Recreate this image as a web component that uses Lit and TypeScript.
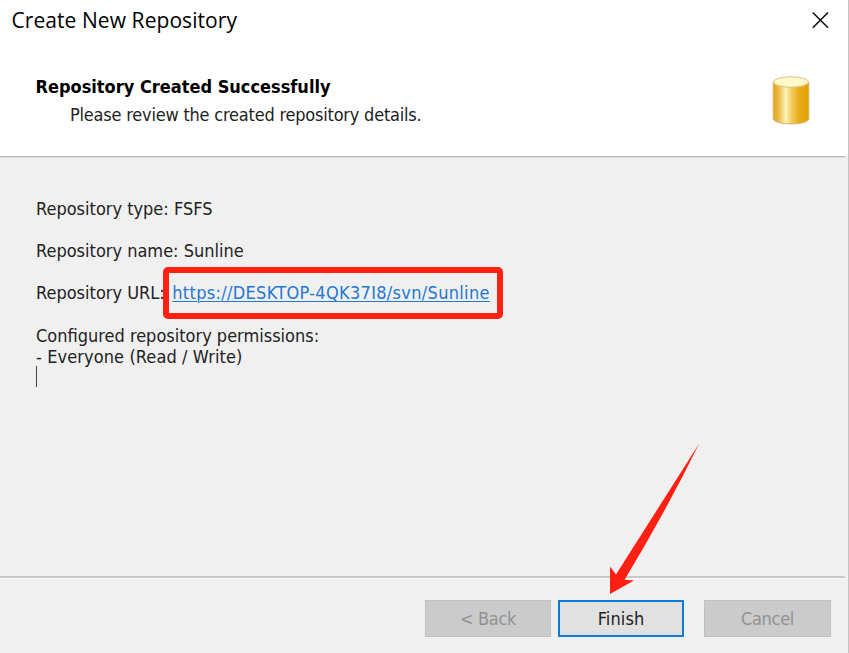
import { LitElement, html, css } from "lit";

class AppRoot extends LitElement {
  static styles = css`
    :host {
      display: flex;
      flex-direction: column;
      position: relative;
      box-sizing: border-box;
      width: 849px;
      height: 653px;
      overflow: hidden;
      border-right: 1px solid #c3c3c3;
      background: #f0f0f0;
      color: #222;
      font: 18px/21px "DejaVu Sans Condensed", "DejaVu Sans", sans-serif;
      white-space: pre;
    }
    .top { background: #fff; height: 156px; flex: none; }
    .titlebar {
      display: flex;
      justify-content: space-between;
      height: 40px;
      padding: 0 18px 0 11.5px;
      align-items: center;
      box-sizing: border-box;
    }
    .title {
      font: 21px/28px "Open Sans", "Noto Sans", sans-serif;
      letter-spacing: 0.07px;
      color: #000;
    }
    .header { display: flex; justify-content: space-between; padding: 36px 38px 0 35.5px; }
    .heading { font-weight: 700; color: #000; line-height: 22px; }
    .sub { padding-left: 34.5px; line-height: 22px; margin-top: 6px; letter-spacing: -0.21px; }
    .rule { flex: none; height: 1px; margin-right: 3px; background: #b9b9b9; border-bottom: 1px solid #dedede; }
    .body { flex: 1; padding: 40px 0 0 36px; }
    .line { height: 21px; margin-bottom: 21px; letter-spacing: 0; }
    .line.tight { margin-bottom: 0; }
    .everyone { letter-spacing: 0.1px; }
    .url { display: flex; margin-bottom: 22px; }
    .marked { position: relative; margin-left: 7.5px; }
    .link {
      color: #2677cf;
      letter-spacing: 0.31px;
      text-decoration: underline;
      text-decoration-thickness: 1px;
      text-underline-offset: 2px;
    }
    .frame {
      position: absolute;
      left: -9.5px;
      top: -15px;
      width: 340px;
      height: 52px;
      box-sizing: border-box;
      border: 6px solid #ff2013;
      border-radius: 5px;
    }
    .caret { width: 1px; height: 21px; margin-top: -1px; background: #444; }
    .foot-rule { flex: none; height: 2px; margin-right: 3px; background: #c8c8c8; border-bottom: 1px solid #fafafa; }
    .footer { display: flex; flex: none; height: 74px; padding: 21px 0 0 425px; box-sizing: border-box; }
    .btn {
      width: 126px;
      height: 37px;
      box-sizing: border-box;
      border: 1px solid #c0c0c0;
      background: #cbcbcb;
      color: #929292;
      line-height: 35px;
      text-align: center;
      letter-spacing: -0.3px;
    }
    .primary { margin: 0 20px 0 7px; border: 2px solid #0d7bdc; background: #e1e1e1; color: #222; line-height: 33px; letter-spacing: 0.1px; }
    .cancel { width: 127px; }
    .arrow { position: absolute; left: 600px; top: 435px; }
  `;

  render() {
    return html`
<div class="top"><div class="titlebar"><span class="title">Create New Repository</span><svg width="19" height="19" viewBox="0 0 19 19"><path d="M1.8 1.5 17 16.7M17 1.5 1.8 16.7" stroke="#111" stroke-width="1.6" fill="none"/></svg></div><div class="header"><div><div class="heading">Repository Created Successfully</div><div class="sub">Please review the created repository details.</div></div><svg width="38" height="50" viewBox="0 0 38 50"><defs><linearGradient id="gold"><stop offset="0" stop-color="#e6a20c"/><stop offset=".14" stop-color="#eaba45"/><stop offset=".36" stop-color="#fff4bc"/><stop offset=".5" stop-color="#f2ce62"/><stop offset=".72" stop-color="#e9ad1c"/><stop offset="1" stop-color="#e2a000"/></linearGradient></defs><path d="M1.2 6.3V42.5C1.2 49.7 36.8 49.7 36.8 42.5V6.3Z" fill="url(#gold)" stroke="#d9b069" stroke-width="1"/><ellipse cx="19" cy="6" rx="17.6" ry="5.2" fill="#fffac8" stroke="#dcc08c" stroke-width="1"/></svg></div></div><div class="rule"></div><div class="body"><div class="line">Repository type: FSFS</div><div class="line">Repository name: Sunline</div><div class="line url"><span>Repository URL:</span><span class="marked"><span class="link">https://DESKTOP-4QK37I8/svn/Sunline</span><span class="frame"></span></span></div><div class="line tight">Configured repository permissions:</div><div class="line tight everyone">- Everyone (Read / Write)</div><div class="caret"></div></div><div class="foot-rule"></div><div class="footer"><div class="btn">&lt; Back</div><div class="btn primary">Finish</div><div class="btn cancel">Cancel</div></div><svg class="arrow" width="105" height="165" viewBox="0 0 105 165"><path d="M99.5 8 16 139.5 10 131.5V159L34 145.5 24.6 144.7Q65 78 99.5 8Z" fill="#ff2013"/></svg>`;
  }
}
customElements.define("app-root", AppRoot);
